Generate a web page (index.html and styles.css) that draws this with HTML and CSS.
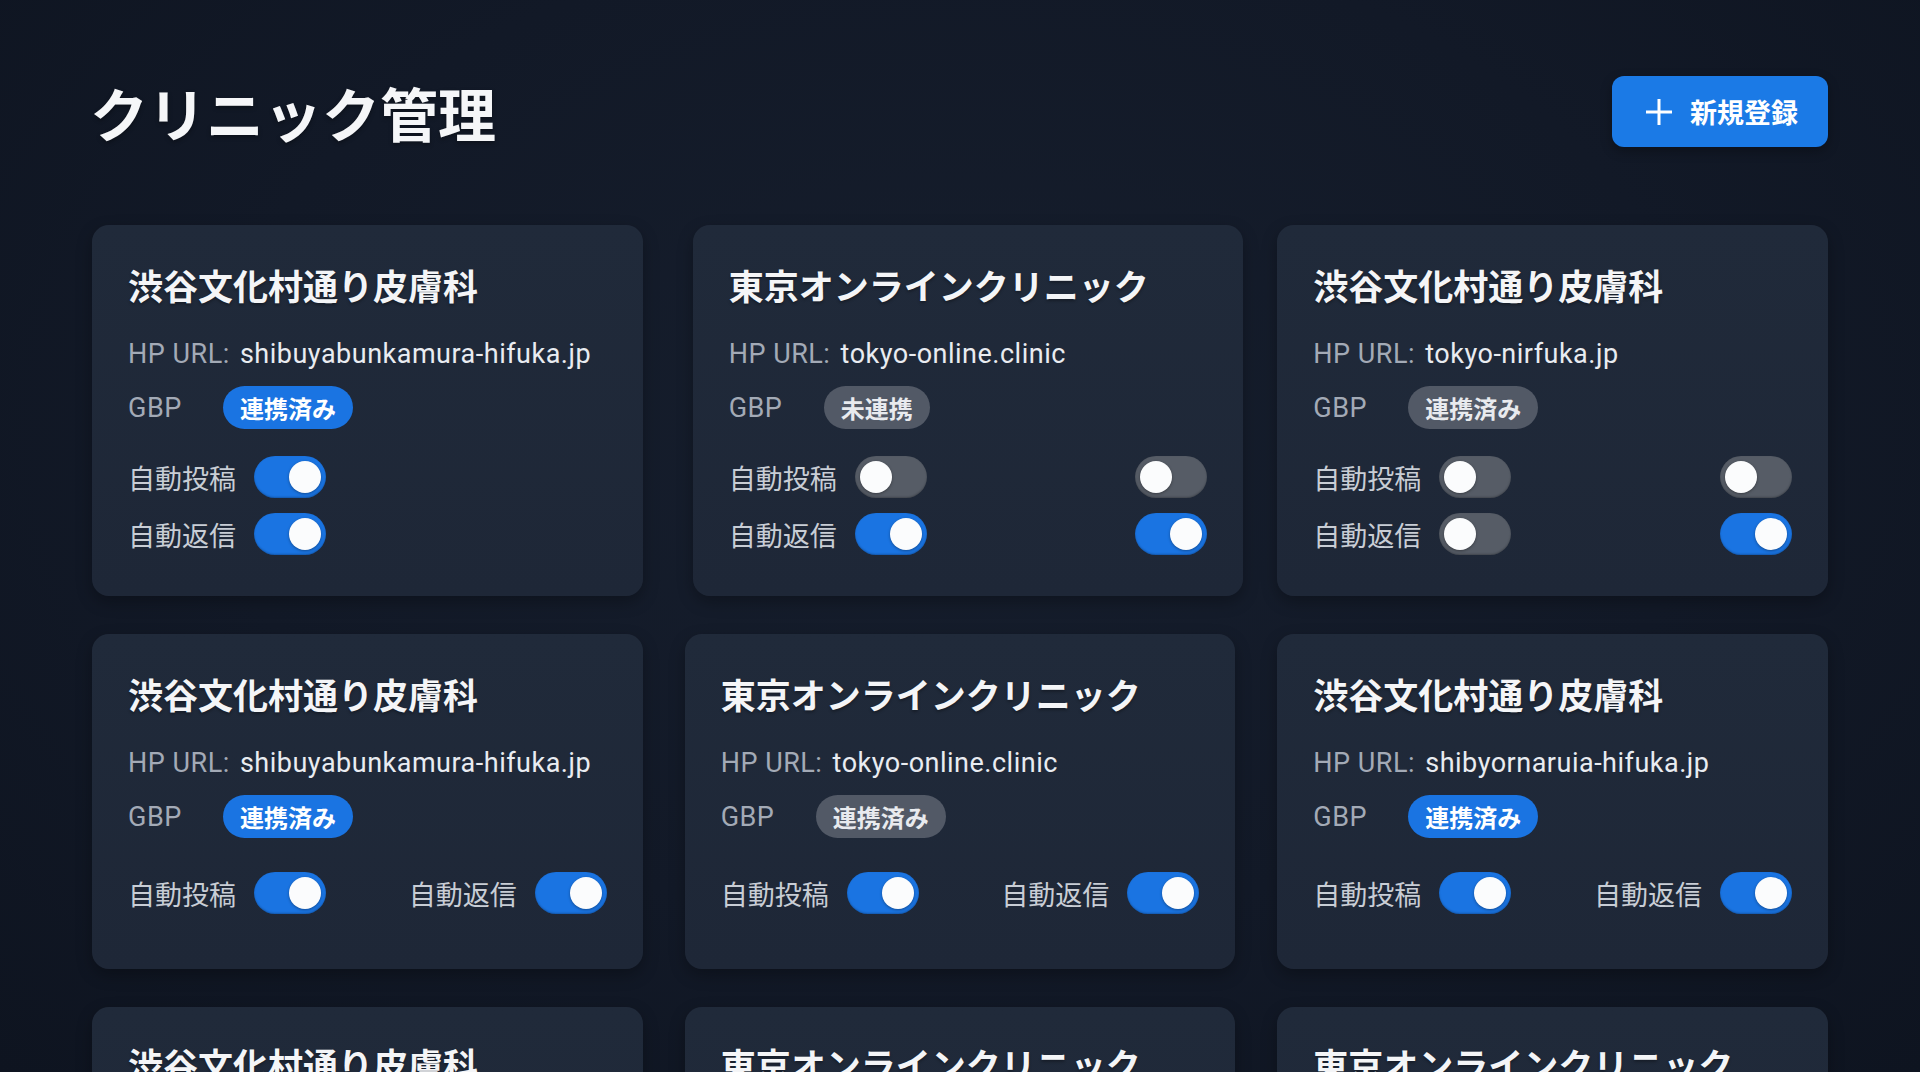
FILE: index.html
```html
<!DOCTYPE html>
<html lang="ja">
<head>
<meta charset="utf-8">
<title>クリニック管理</title>
<link rel="stylesheet" href="styles.css">
</head>
<body>
<div class="page">
  <header class="header">
    <h1 class="page-title">クリニック管理</h1>
    <button class="btn-new" type="button">
      <svg class="btn-plus" viewBox="0 0 26 26" width="26" height="26" aria-hidden="true"><path d="M13 1v24M1 13h24" stroke="#fff" stroke-width="3" stroke-linecap="square" fill="none"/></svg>
      <span>新規登録</span>
    </button>
  </header>

  <main class="grid">
    <!-- Row 1 -->
    <section class="card">
      <h2 class="card-title">渋谷文化村通り皮膚科</h2>
      <p class="url"><span class="url-label">HP URL:</span> <span class="url-value">shibuyabunkamura-hifuka.jp</span></p>
      <div class="gbp"><span class="gbp-label">GBP</span><span class="badge badge-blue">連携済み</span></div>
      <div class="toggles toggles-stack">
        <div class="trow"><span class="tlabel">自動投稿</span><span class="toggle on"></span></div>
        <div class="trow"><span class="tlabel">自動返信</span><span class="toggle on"></span></div>
      </div>
    </section>

    <section class="card card-shift">
      <h2 class="card-title">東京オンラインクリニック</h2>
      <p class="url"><span class="url-label">HP URL:</span> <span class="url-value">tokyo-online.clinic</span></p>
      <div class="gbp"><span class="gbp-label">GBP</span><span class="badge badge-gray">未連携</span></div>
      <div class="toggles toggles-stack">
        <div class="trow"><span class="tlabel">自動投稿</span><span class="toggle"></span><span class="spacer"></span><span class="toggle"></span></div>
        <div class="trow"><span class="tlabel">自動返信</span><span class="toggle on"></span><span class="spacer"></span><span class="toggle on"></span></div>
      </div>
    </section>

    <section class="card">
      <h2 class="card-title">渋谷文化村通り皮膚科</h2>
      <p class="url"><span class="url-label">HP URL:</span> <span class="url-value">tokyo-nirfuka.jp</span></p>
      <div class="gbp"><span class="gbp-label">GBP</span><span class="badge badge-gray">連携済み</span></div>
      <div class="toggles toggles-stack">
        <div class="trow"><span class="tlabel">自動投稿</span><span class="toggle"></span><span class="spacer"></span><span class="toggle"></span></div>
        <div class="trow"><span class="tlabel">自動返信</span><span class="toggle"></span><span class="spacer"></span><span class="toggle on"></span></div>
      </div>
    </section>

    <!-- Row 2 -->
    <section class="card card-inline">
      <h2 class="card-title">渋谷文化村通り皮膚科</h2>
      <p class="url"><span class="url-label">HP URL:</span> <span class="url-value">shibuyabunkamura-hifuka.jp</span></p>
      <div class="gbp"><span class="gbp-label">GBP</span><span class="badge badge-blue">連携済み</span></div>
      <div class="toggles toggles-inline">
        <div class="trow"><span class="tlabel">自動投稿</span><span class="toggle on"></span></div>
        <div class="trow"><span class="tlabel">自動返信</span><span class="toggle on"></span></div>
      </div>
    </section>

    <section class="card card-inline">
      <h2 class="card-title">東京オンラインクリニック</h2>
      <p class="url"><span class="url-label">HP URL:</span> <span class="url-value">tokyo-online.clinic</span></p>
      <div class="gbp"><span class="gbp-label">GBP</span><span class="badge badge-gray">連携済み</span></div>
      <div class="toggles toggles-inline">
        <div class="trow"><span class="tlabel">自動投稿</span><span class="toggle on"></span></div>
        <div class="trow"><span class="tlabel">自動返信</span><span class="toggle on"></span></div>
      </div>
    </section>

    <section class="card card-inline">
      <h2 class="card-title">渋谷文化村通り皮膚科</h2>
      <p class="url"><span class="url-label">HP URL:</span> <span class="url-value">shibyornaruia-hifuka.jp</span></p>
      <div class="gbp"><span class="gbp-label">GBP</span><span class="badge badge-blue">連携済み</span></div>
      <div class="toggles toggles-inline">
        <div class="trow"><span class="tlabel">自動投稿</span><span class="toggle on"></span></div>
        <div class="trow"><span class="tlabel">自動返信</span><span class="toggle on"></span></div>
      </div>
    </section>

    <!-- Row 3 (continues below the fold) -->
    <section class="card card-top">
      <h2 class="card-title">渋谷文化村通り皮膚科</h2>
    </section>

    <section class="card card-top">
      <h2 class="card-title">東京オンラインクリニック</h2>
    </section>

    <section class="card card-top">
      <h2 class="card-title">東京オンラインクリニック</h2>
    </section>
  </main>
</div>
</body>
</html>
```
FILE: styles.css
```css
* { box-sizing: border-box; }

html, body {
  margin: 0;
  padding: 0;
}

body {
  background: radial-gradient(ellipse at 50% 40%, #161e2d 0%, #121927 55%, #0e1420 100%);
  background-color: #121926;
  color: #f3f4f6;
  font-family: Roboto, "Noto Sans CJK JP", sans-serif;
  height: 1072px;
  overflow: hidden;
}

.page {
  padding: 76px 92px 0;
}

.header {
  display: flex;
  align-items: center;
  justify-content: space-between;
  height: 71px;
}

.page-title {
  margin: 0 0 0 -2px;
  font-family: "Noto Sans CJK JP", sans-serif;
  font-size: 58px;
  font-weight: 700;
  line-height: 1;
  color: #f5f6f8;
  text-shadow: 0 2px 4px rgba(0, 0, 0, 0.35);
}

.btn-new {
  display: flex;
  align-items: center;
  gap: 18px;
  height: 71px;
  padding: 0 30px 0 34px;
  border: 0;
  border-radius: 12px;
  background: #1b7ae6;
  color: #ffffff;
  font-family: "Noto Sans CJK JP", sans-serif;
  font-size: 27px;
  font-weight: 700;
  line-height: 1;
  box-shadow: 0 4px 12px rgba(0, 0, 0, 0.3);
}

.btn-plus { display: block; }

.grid {
  display: grid;
  grid-template-columns: repeat(3, 1fr);
  column-gap: 42px;
  row-gap: 38px;
  margin-top: 78px;
}

.card {
  display: flex;
  flex-direction: column;
  background: linear-gradient(180deg, #202a3a 0%, #1e2737 100%);
  border-radius: 17px;
  padding: 39px 36px 41px;
  box-shadow: 0 6px 16px rgba(0, 0, 0, 0.28);
}

.card-shift {
  margin-left: 8px;
  margin-right: -8px;
}

.card-inline {
  padding-bottom: 55px;
}

.card-top {
  padding-top: 36px;
  min-height: 335px;
}

.card-title {
  margin: 0;
  font-family: "Noto Sans CJK JP", sans-serif;
  font-size: 35px;
  font-weight: 700;
  line-height: 42px;
  color: #f4f5f7;
  text-shadow: 0 2px 3px rgba(0, 0, 0, 0.3);
}

.url {
  margin: 31px 0 0;
  font-size: 27px;
  letter-spacing: 0.5px;
  line-height: 34px;
  white-space: nowrap;
}

.url-label { color: #a3aab6; }
.url-value { color: #e9ecf1; margin-left: 3px; }

.gbp {
  display: flex;
  align-items: center;
  margin-top: 15px;
  height: 43px;
}

.gbp-label {
  width: 95px;
  font-size: 27px;
  letter-spacing: 0.5px;
  color: #a3aab6;
}

.badge {
  display: inline-block;
  height: 43px;
  line-height: 43px;
  padding: 0 17px;
  border-radius: 22px;
  font-family: "Noto Sans CJK JP", sans-serif;
  font-size: 24px;
  font-weight: 700;
}

.badge-blue {
  background: #1a74e2;
  color: #ffffff;
}

.badge-gray {
  background: #525966;
  color: #e8eaee;
}

.toggles {
  display: flex;
}

.toggles-stack {
  flex-direction: column;
  gap: 15px;
  margin-top: 27px;
}

.toggles-inline {
  flex-direction: row;
  justify-content: space-between;
  margin-top: 34px;
}

.trow {
  display: flex;
  align-items: center;
  height: 42px;
}

.tlabel {
  font-family: "Noto Sans CJK JP", sans-serif;
  font-size: 27px;
  color: #c8cdd5;
  margin-right: 18px;
  line-height: 1;
}

.spacer { flex: 1; }

.toggle {
  position: relative;
  display: inline-block;
  width: 72px;
  height: 42px;
  border-radius: 21px;
  background: #565c66;
  box-shadow: inset 0 -1px 2px rgba(0, 0, 0, 0.25);
  flex: none;
}

.toggle::after {
  content: "";
  position: absolute;
  top: 5px;
  left: 5px;
  width: 32px;
  height: 32px;
  border-radius: 50%;
  background: #fbfcfd;
  box-shadow: 0 1px 3px rgba(0, 0, 0, 0.35);
}

.toggle.on {
  background: #1a74e2;
}

.toggle.on::after {
  left: 35px;
}
```
